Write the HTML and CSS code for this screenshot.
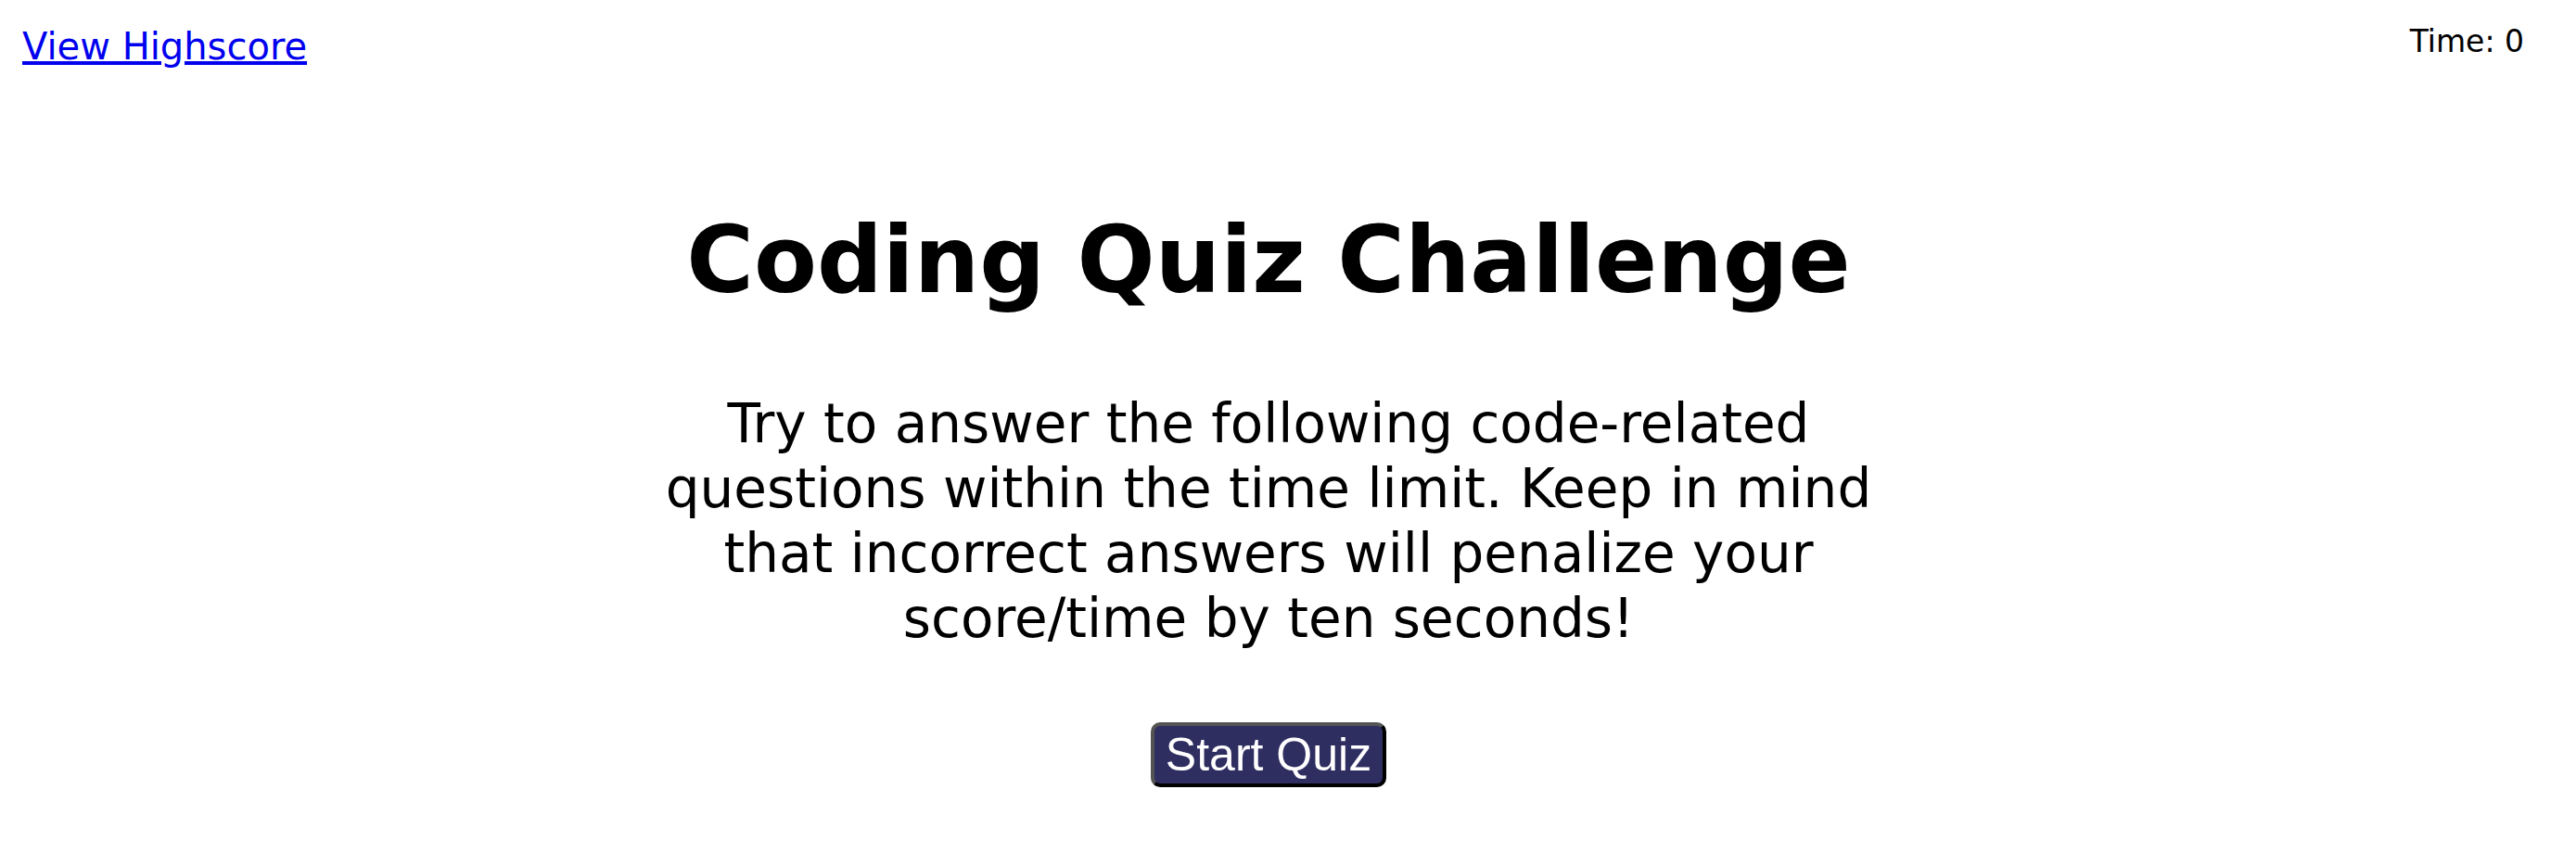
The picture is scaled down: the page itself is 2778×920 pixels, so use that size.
FILE: index.html
```html
<!DOCTYPE html>
<html lang="en">
<head>
<meta charset="utf-8">
<title>Coding Quiz Challenge</title>
<link rel="stylesheet" href="styles.css">
</head>
<body>
<header class="topbar">
<a class="highscore-link" href="#highscores">View Highscore</a>
<div class="timer">Time: <span>0</span></div>
</header>
<main class="quiz">
<h1 class="title">Coding Quiz Challenge</h1>
<p class="intro">Try to answer the following code-related questions within the time limit. Keep in mind that incorrect answers will penalize your score/time by ten seconds!</p>
<button class="start" type="button">Start Quiz</button>
</main>
</body>
</html>
```

FILE: styles.css
```css
body {
  margin: 0;
  background: #fff;
  color: #000;
  font-family: Verdana, "DejaVu Sans", sans-serif;
}

.topbar {
  display: flex;
  justify-content: space-between;
  align-items: flex-start;
  padding: 25px 56px 0 24px;
}

.highscore-link {
  color: #0000ee;
  font-size: 40px;
  line-height: 50px;
  text-decoration-thickness: 4px;
  text-underline-offset: 2px;
}

.timer {
  font-size: 33px;
  line-height: 40px;
}

.quiz {
  display: flex;
  flex-direction: column;
  align-items: center;
  width: 50%;
  margin: 146px auto 0;
  padding-right: 42px;
  box-sizing: border-box;
  text-align: center;
}

.title {
  margin: 0;
  font-size: 99px;
  line-height: 120px;
}

.intro {
  margin: 81px 0 77px;
  font-size: 58px;
  line-height: 70px;
}

.start {
  padding: 2px 12px;
  border: 4px outset #000;
  border-radius: 10px;
  background: #2f2e61;
  color: #fff;
  font-family: "Liberation Sans", Arial, sans-serif;
  font-size: 50px;
  line-height: 58px;
}
```
